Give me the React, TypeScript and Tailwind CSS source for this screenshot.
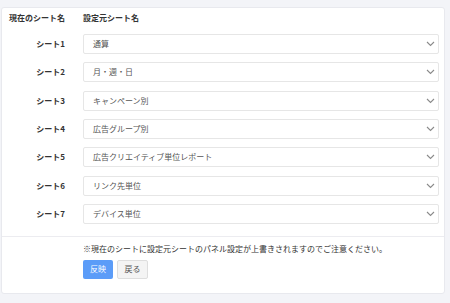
import React from "react";

const rows = [
  { label: "シート1", value: "通算" },
  { label: "シート2", value: "月・週・日" },
  { label: "シート3", value: "キャンペーン別" },
  { label: "シート4", value: "広告グループ別" },
  { label: "シート5", value: "広告クリエイティブ単位レポート" },
  { label: "シート6", value: "リンク先単位" },
  { label: "シート7", value: "デバイス単位" },
];

const Chevron = () => (
  <svg width="9" height="6" viewBox="0 0 9 6" className="shrink-0">
    <path d="M1 1l3.5 3.5L8 1" fill="none" stroke="#8a8a8a" strokeWidth="1.1" />
  </svg>
);

export default function App() {
  return (
    <div
      className="min-h-[303px] bg-[#f3f4f8] pl-[1px] pr-[5px] pt-[7px] pb-[9px]"
      style={{ fontFamily: '"Noto Sans CJK JP", "Noto Sans", sans-serif' }}
    >
      <div className="bg-white rounded-[3px] border border-[#e8e9ee] pt-[3px] pb-[14px]">
        <div className="flex h-[14px] items-center text-[8px] font-bold text-[#333] leading-[14px]">
          <div className="w-[81px] pl-[7px]">現在のシート名</div>
          <div>設定元シート名</div>
        </div>

        <div className="mt-[9px] flex flex-col gap-[8.33px] pr-[5px]">
          {rows.map((r) => (
            <div key={r.label} className="flex items-center h-[20px]">
              <div className="w-[63px] text-right text-[8px] font-bold text-[#333]">
                {r.label}
              </div>
              <div className="ml-[18px] flex-1 h-[20px] border border-[#e6e6e6] rounded-[2px] flex items-center justify-between pl-[9px] pr-[3px]">
                <span className="text-[8px] text-[#555]">{r.value}</span>
                <Chevron />
              </div>
            </div>
          ))}
        </div>

        <div className="mt-[12px] border-t border-[#ececf0] pt-[6px] pl-[81px]">
          <p className="text-[8px] leading-[12px] text-[#333]">
            ※現在のシートに設定元シートのパネル設定が上書きされますのでご注意ください。
          </p>
          <div className="mt-[5px] flex gap-[4px]">
            <button className="w-[30px] h-[19px] rounded-[2px] bg-[#5b9cf8] text-white text-[8px]">
              反映
            </button>
            <button className="w-[31px] h-[19px] rounded-[2px] bg-[#f4f4f4] border border-[#dedede] text-[#555] text-[8px]">
              戻る
            </button>
          </div>
        </div>
      </div>
    </div>
  );
}
